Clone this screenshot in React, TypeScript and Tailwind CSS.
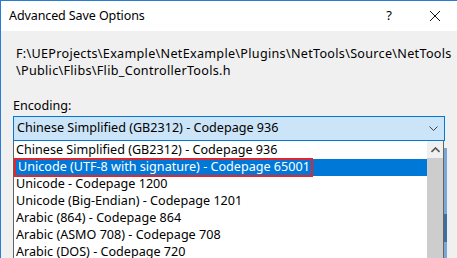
import React from 'react'

const font = { fontFamily: '"Noto Sans", "Open Sans", Arial, sans-serif' }

const items = [
  'Chinese Simplified (GB2312) - Codepage 936',
  'Unicode (UTF-8 with signature) - Codepage 65001',
  'Unicode - Codepage 1200',
  'Unicode (Big-Endian) - Codepage 1201',
  'Arabic (864) - Codepage 864',
  'Arabic (ASMO 708) - Codepage 708',
  'Arabic (DOS) - Codepage 720',
]

const App = () => {
  return (
    <div
      className="w-[457px] h-[258px] overflow-hidden border-t border-l border-[#2b7ad3] bg-[#f0f0f0] text-[12.6px] text-black flex flex-col"
      style={font}
    >
      {/* title bar */}
      <div className="h-[30px] bg-white flex items-center shrink-0">
        <span className="pl-[8px] text-[12.5px] tracking-[-0.1px]">Advanced Save Options</span>
        <span className="ml-auto mr-[37px] text-[13px]">?</span>
        <svg width="12" height="12" viewBox="0 0 12 12" className="mr-[16px]">
          <path d="M1 1 L11 11 M11 1 L1 11" stroke="#111" strokeWidth="1" />
        </svg>
      </div>

      <div className="flex flex-col pl-[12px]">
        <div className="pl-[3px] pt-[14px] leading-[17px] tracking-[0.3px]">
          <div>F:\UEProjects\Example\NetExample\Plugins\NetTools\Source\NetTools</div>
          <div>\Public\Flibs\Flib_ControllerTools.h</div>
        </div>
        <div className="pt-[18px] leading-[17px]">Encoding:</div>

        {/* combo box */}
        <div className="mt-[2px] w-[432px] h-[25px] bg-[#cce4f7] border border-[#0078d7] flex items-center pl-[3px] pr-[4px]">
          <span>Chinese Simplified (GB2312) - Codepage 936</span>
          <svg width="9" height="6" viewBox="0 0 9 6" className="ml-auto mr-[2px]">
            <path d="M0.5 0.5 L4.5 4.5 L8.5 0.5" stroke="#444" strokeWidth="1" fill="none" />
          </svg>
        </div>

        {/* dropdown list */}
        <div className="flex">
          <div className="w-[431px] h-[120px] bg-white border-l border-r border-[#646464] flex">
            <div className="flex-1 flex flex-col pt-[1px]">
              {items.map((t, i) => (
                <div
                  key={i}
                  className={
                    i === 1
                      ? 'h-[17px] flex items-center pl-[2px] bg-[#0078d7] text-white'
                      : 'h-[17px] flex items-center pl-[2px]'
                  }
                >
                  {i === 1 ? (
                    <span className="h-[19px] -ml-[2px] pl-[2px] pr-[1px] flex items-center border-2 border-[#e0262f]">
                      {t}
                    </span>
                  ) : (
                    <span>{t}</span>
                  )}
                </div>
              ))}
            </div>
            {/* scrollbar */}
            <div className="w-[16px] flex flex-col bg-[#f0f0f0]">
              <div className="h-[17px] flex items-center justify-center">
                <svg width="9" height="6" viewBox="0 0 9 6">
                  <path d="M0.5 5 L4.5 1 L8.5 5" stroke="#555" strokeWidth="1.6" fill="none" />
                </svg>
              </div>
              <div className="flex-1 bg-[#cdcdcd]" />
            </div>
          </div>
          <div className="w-[3px] mt-[7px] flex flex-col">
            <div className="h-[66px] bg-[#7aa8d6]" />
            <div className="h-[28px] bg-[#3f6f9f]" />
            <div className="flex-1 bg-[#7aa8d6]" />
          </div>
        </div>
      </div>
    </div>
  )
}

export default App
